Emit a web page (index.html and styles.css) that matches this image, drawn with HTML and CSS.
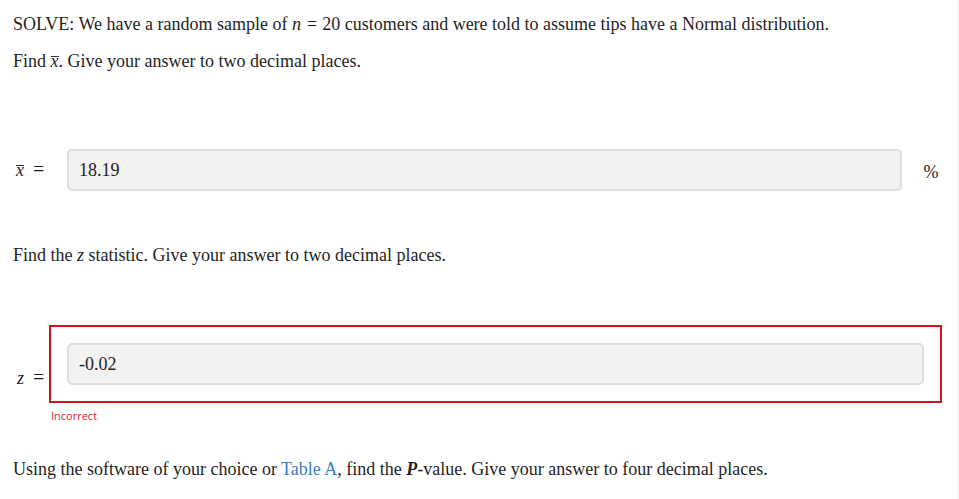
FILE: index.html
```html
<!DOCTYPE html>
<html>
<head>
<meta charset="utf-8">
<link rel="stylesheet" href="styles.css">
</head>
<body>
<div class="page">
  <p class="q first">SOLVE: We have a random sample of <i>n</i><span class="eq">=</span>20 customers and were told to assume tips have a Normal distribution.</p>
  <p class="q second">Find <span class="bar"><i>x</i></span>. Give your answer to two decimal places.</p>

  <div class="row row-x">
    <div class="label"><span class="bar"><i>x</i></span><span class="eq">=</span></div>
    <div class="field"><div class="input">18.19</div></div>
    <div class="unit">%</div>
  </div>

  <p class="q third">Find the <i>z</i> statistic. Give your answer to two decimal places.</p>

  <div class="row row-z">
    <div class="label"><i>z</i><span class="eq">=</span></div>
    <div class="answer">
      <div class="wrong"><div class="input">-0.02</div></div>
      <div class="feedback">Incorrect</div>
    </div>
  </div>

  <p class="q fourth">Using the software of your choice or <a class="link" href="#">Table A</a>, find the <i class="pv">P</i>-value. Give your answer to four decimal places.</p>
</div>
</body>
</html>
```

FILE: styles.css
```css
html, body {
  margin: 0;
  padding: 0;
  background: #fff;
}
.page {
  width: 958px;
  height: 499px;
  border-right: 1px solid #ececec;
  font-family: "Liberation Serif", "Times New Roman", serif;
  font-size: 18px;
  color: #1f1f1f;
  overflow: hidden;
}
.q {
  margin: 0;
  padding-left: 13px;
  line-height: 21px;
}
.first { padding-top: 14px; }
.second { margin-top: 16px; }
.third { margin-top: 54px; }
.fourth { margin-top: 35px; }
.eq {
  margin: 0 5px 0 6px;
}
.label .eq {
  display: inline-block;
  margin: 0 0 0 9px;
  font-size: 20px;
  line-height: 21px;
}
.bar {
  display: inline-block;
  line-height: 8px;
  border-top: 1px solid #333;
  padding-top: 0;
}
.row {
  display: flex;
  align-items: center;
}
.row-x { margin-top: 77px; }
.row-z { margin-top: 59px; }
.label {
  width: 49px;
  box-sizing: border-box;
  padding-left: 16px;
  line-height: 21px;
  white-space: nowrap;
}
.row-x .label { width: 67px; }
.row-z .label { padding-top: 6px; padding-left: 17px; }
.field {
  width: 835px;
}
.input {
  height: 42px;
  box-sizing: border-box;
  background: #f2f2f2;
  border: 2px solid #dedede;
  border-radius: 5px;
  padding-left: 10px;
  display: flex;
  align-items: center;
  font-size: 18px;
  color: #1f1f1f;
}
.unit {
  flex: 1;
  text-align: center;
  padding-left: 2px;
  padding-top: 5px;
}
.answer {
  width: 893px;
}
.wrong {
  border: 2px solid #d0111c;
  padding: 16px;
}
.feedback {
  font-family: "Open Sans", "Noto Sans", sans-serif;
  font-size: 11px;
  color: #d9213a;
  line-height: 16px;
  padding-left: 2px;
  margin-top: 5px;
}
.link {
  color: #3a7fc1;
  text-decoration: none;
}
.pv { font-weight: bold; }
```
